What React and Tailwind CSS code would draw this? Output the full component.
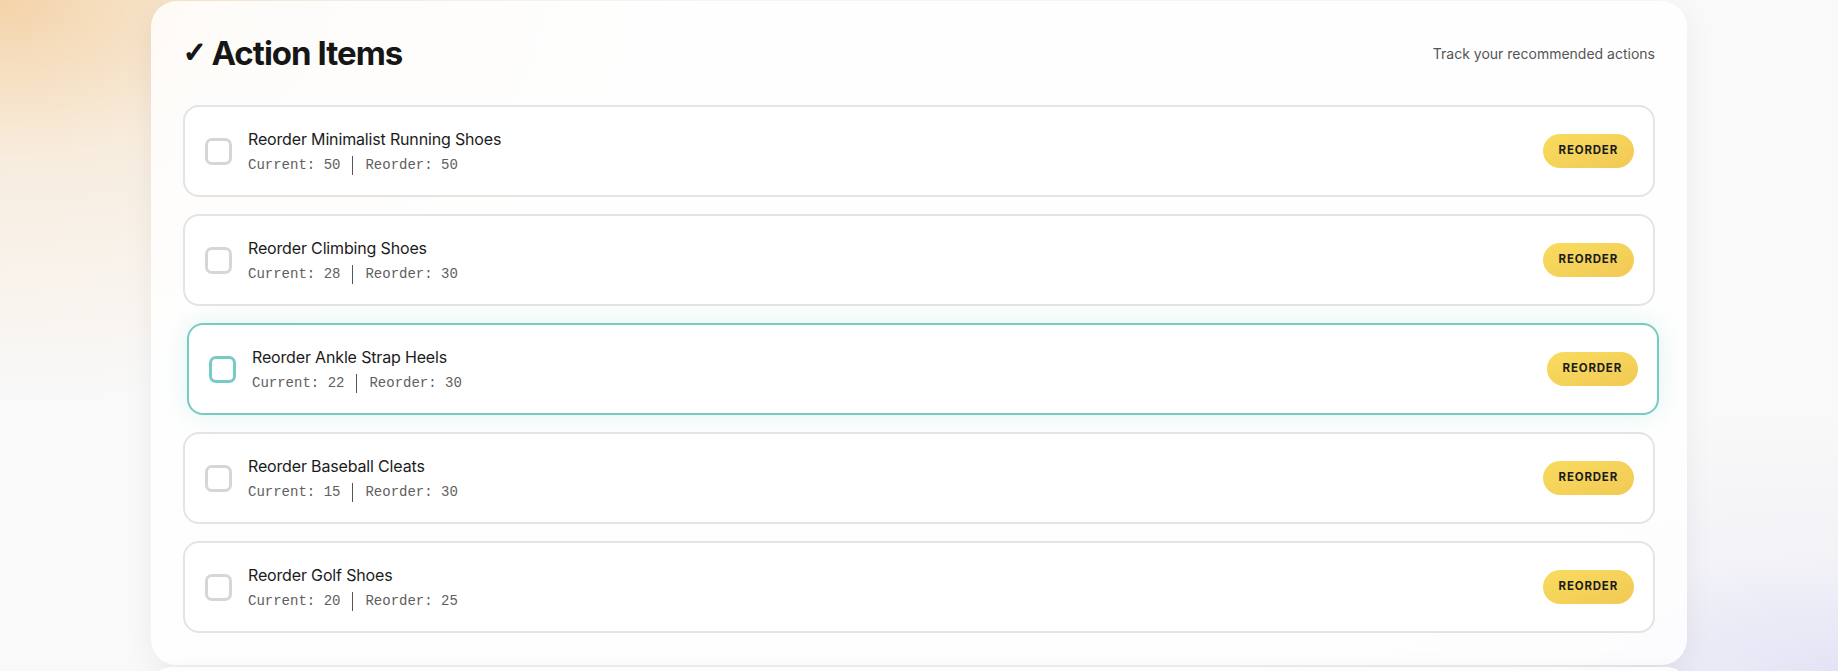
import React from "react";

const items = [
  { name: "Reorder Minimalist Running Shoes", current: 50, reorder: 50 },
  { name: "Reorder Climbing Shoes", current: 28, reorder: 30 },
  { name: "Reorder Ankle Strap Heels", current: 22, reorder: 30, active: true },
  { name: "Reorder Baseball Cleats", current: 15, reorder: 30 },
  { name: "Reorder Golf Shoes", current: 20, reorder: 25 },
];

function Row({ item }) {
  const active = item.active;
  return (
    <div
      className={
        active
          ? "flex items-center justify-between rounded-2xl border-2 border-[#76cbc4] bg-white py-5 pl-5 pr-[19px] translate-x-1 shadow-[0_0_24px_rgba(118,203,196,0.22)]"
          : "flex items-center justify-between rounded-2xl border-2 border-[#e4e4e4] bg-white py-5 pl-5 pr-[19px]"
      }
    >
      <div className="flex items-center gap-4">
        <div
          className={
            active
              ? "h-[27px] w-[27px] rounded-[7px] border-[3px] border-[#76cbc4] bg-white"
              : "h-[27px] w-[27px] rounded-[7px] border-[3px] border-[#d6d6d6] bg-white"
          }
        />
        <div className="flex flex-col">
          <div className="text-[16px] font-normal leading-6 text-[#1c1c1c] font-['Inter',sans-serif] tracking-[-0.01em]">
            {item.name}
          </div>
          <div className="mt-1 flex items-center text-[14px] leading-5 text-[#606060] font-['Liberation_Mono',monospace]">
            <span>Current: {item.current}</span>
            <span className="mx-3 h-[19px] w-px bg-[#555]" />
            <span>Reorder: {item.reorder}</span>
          </div>
        </div>
      </div>
      <button className="h-[34px] rounded-full bg-gradient-to-br from-[#f8dc5e] to-[#f2c955] px-4 text-[11.5px] font-bold tracking-[0.07em] text-[#1c1c1c] font-['Inter',sans-serif]">
        REORDER
      </button>
    </div>
  );
}

export default function App() {
  return (
    <div className="relative h-[671px] w-full overflow-hidden bg-[#f9f9f9] font-['Inter',sans-serif]">
      <div className="pointer-events-none absolute inset-0 bg-[radial-gradient(ellipse_700px_400px_at_0%_0%,rgba(243,205,155,0.85)_0%,rgba(246,222,190,0.45)_40%,rgba(249,249,249,0)_100%)]" />
      <div className="pointer-events-none absolute inset-0 bg-[radial-gradient(ellipse_700px_260px_at_100%_100%,rgba(226,226,246,0.95)_0%,rgba(236,236,246,0.5)_45%,rgba(249,249,249,0)_100%)]" />
      <div className="relative mx-auto flex max-w-[1536px] flex-col gap-[2px] pt-[1px]">
        <div className="rounded-[26px] bg-white/85 px-8 pt-8 pb-[32px] shadow-[0_8px_30px_rgba(0,0,0,0.06)]">
          <div className="mb-8 flex items-center justify-between">
            <h2 className="flex items-center text-[33px] font-bold leading-10 tracking-[-0.03em] text-[#161616] font-['Inter',sans-serif]">
              <span className="mr-[6px] text-[28px] font-bold font-['DejaVu_Sans',sans-serif] [-webkit-text-stroke:1.6px_#161616]">✓</span>
              Action Items
            </h2>
            <span className="text-[14px] text-[#555] font-['Inter',sans-serif]">
              Track your recommended actions
            </span>
          </div>
          <div className="flex flex-col gap-[17px]">
            {items.map((it) => (
              <Row key={it.name} item={it} />
            ))}
          </div>
        </div>
        <div className="h-10 rounded-[26px] bg-white/85 shadow-[0_8px_30px_rgba(0,0,0,0.06)]" />
      </div>
    </div>
  );
}
